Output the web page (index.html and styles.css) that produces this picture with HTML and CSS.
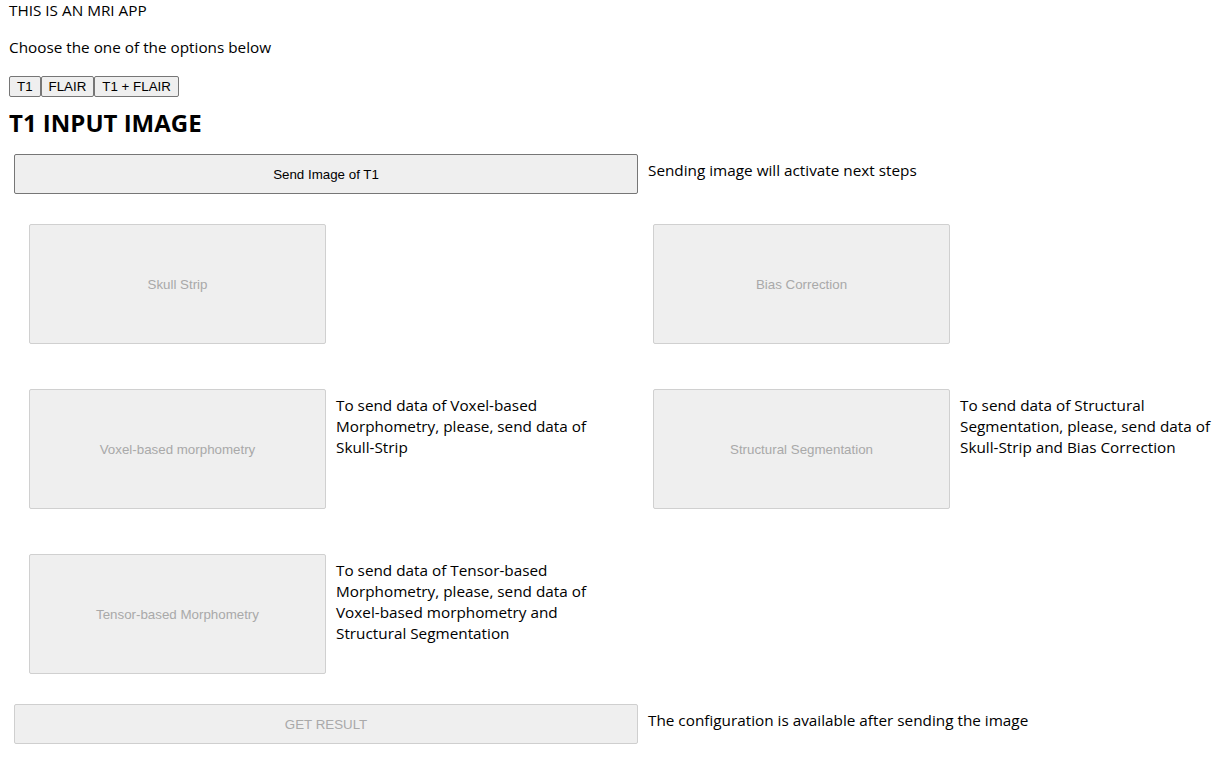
FILE: index.html
```html
<!DOCTYPE html>
<html lang="en">
<head>
<meta charset="utf-8">
<title>MRI APP</title>
<link rel="stylesheet" href="styles.css">
</head>
<body>
<div class="app">
  <div class="title">THIS IS AN MRI APP</div>
  <p class="intro">Choose the one of the options below</p>
  <div class="modes">
    <button class="mode-btn">T1</button>
    <button class="mode-btn">FLAIR</button>
    <button class="mode-btn">T1 + FLAIR</button>
  </div>
  <h2 class="heading">T1 INPUT IMAGE</h2>

  <div class="wide-row">
    <button class="wide-btn">Send Image of T1</button>
    <div class="note">Sending image will activate next steps</div>
  </div>

  <div class="steps">
    <div class="step">
      <button class="step-btn" disabled>Skull Strip</button>
    </div>
    <div class="step">
      <button class="step-btn" disabled>Bias Correction</button>
    </div>
    <div class="step">
      <button class="step-btn" disabled>Voxel-based morphometry</button>
      <div class="step-note">To send data of Voxel-based Morphometry, please, send data of Skull-Strip</div>
    </div>
    <div class="step">
      <button class="step-btn" disabled>Structural Segmentation</button>
      <div class="step-note">To send data of Structural Segmentation, please, send data of Skull-Strip and Bias Correction</div>
    </div>
    <div class="step">
      <button class="step-btn" disabled>Tensor-based Morphometry</button>
      <div class="step-note">To send data of Tensor-based Morphometry, please, send data of Voxel-based morphometry and Structural Segmentation</div>
    </div>
  </div>

  <div class="wide-row result-row">
    <button class="wide-btn" disabled>GET RESULT</button>
    <div class="note">The configuration is available after sending the image</div>
  </div>
</div>
</body>
</html>
```
FILE: styles.css
```css
html, body {
  margin: 0;
  padding: 0;
  background: #ffffff;
}

body {
  font-family: "Open Sans", "Noto Sans", sans-serif;
  font-size: 15.3px;
  line-height: 21px;
  color: #000000;
}

.app {
  padding: 0 8px;
}

.title {
  margin: 0;
  padding-left: 1px;
}

.intro {
  margin: 16px 0 16px;
  padding-left: 1px;
}

.modes {
  display: flex;
  padding-left: 1px;
  height: 23px;
  align-items: flex-start;
  padding-top: 2px;
  box-sizing: border-box;
}

.mode-btn {
  font-family: "Liberation Sans", Arial, sans-serif;
  font-size: 13.33px;
  line-height: 16px;
  height: 21px;
  padding: 1px 7px;
  margin: 0;
  background: #efefef;
  color: #000000;
  border: 1px solid #767676;
  border-radius: 2px;
}

.heading {
  font-size: 24px;
  line-height: 32px;
  font-weight: 700;
  margin: 10px 0 15px;
  padding-left: 1px;
}

.wide-row {
  display: flex;
  align-items: flex-start;
  padding-left: 6px;
}

.wide-btn {
  width: 624px;
  height: 40px;
  margin: 0;
  padding: 0;
  background: #efefef;
  border: 1px solid #767676;
  border-radius: 2px;
  color: #000000;
  font-family: "Liberation Sans", Arial, sans-serif;
  font-size: 13.33px;
}

.wide-btn:disabled {
  border-color: #cfcfcf;
  color: #a9a9a9;
}

.note {
  margin-left: 10px;
  padding-top: 6px;
}

.steps {
  display: grid;
  grid-template-columns: 624px 624px;
  row-gap: 45px;
  margin-top: 30px;
  padding-left: 21px;
}

.step {
  display: flex;
  align-items: flex-start;
}

.step-btn {
  flex: none;
  width: 297px;
  height: 120px;
  margin: 0;
  padding: 0;
  background: #efefef;
  border: 1px solid #d0d0d0;
  border-radius: 2px;
  color: #a9a9a9;
  font-family: "Liberation Sans", Arial, sans-serif;
  font-size: 13.33px;
}

.step-note {
  margin-left: 10px;
  padding-top: 6px;
  width: 262px;
}

.result-row {
  margin-top: 30px;
}
```
